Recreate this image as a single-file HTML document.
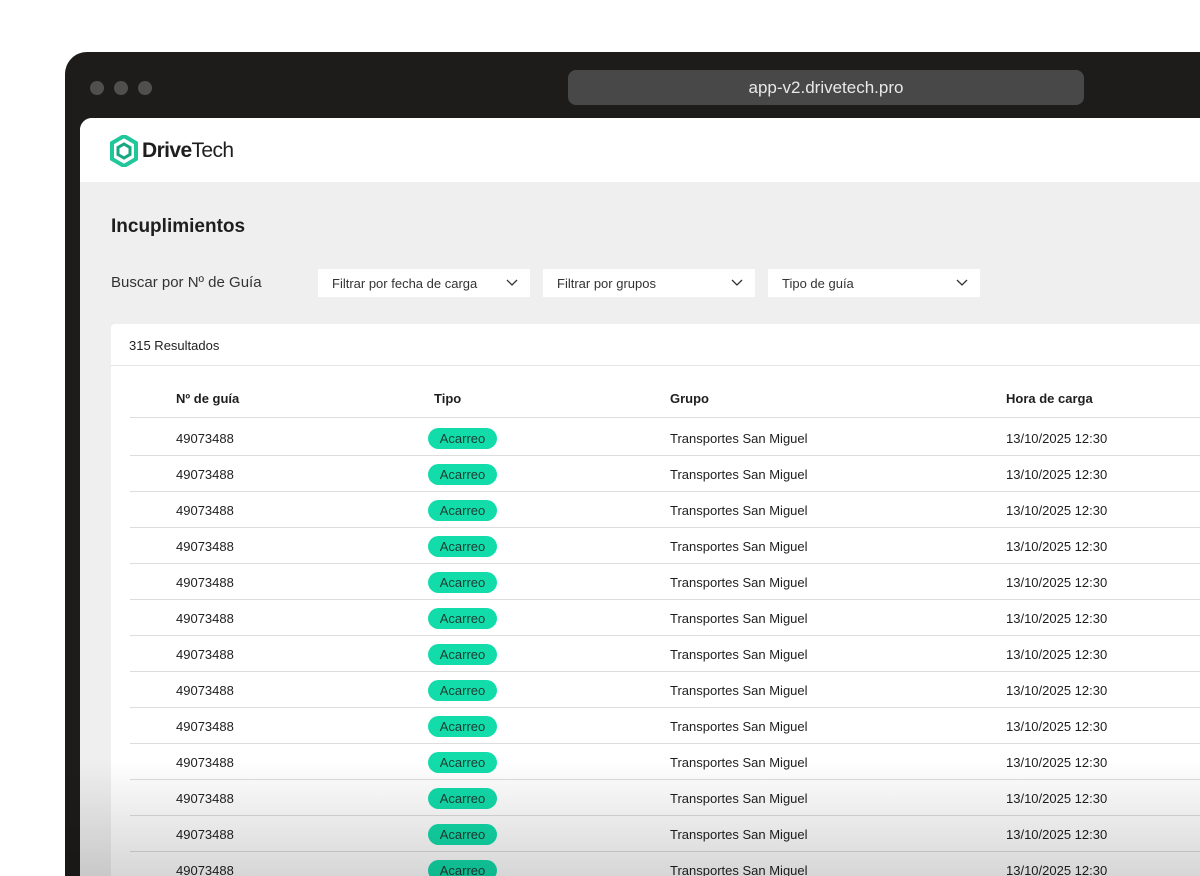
<!DOCTYPE html><html style="width:1200px;height:876px;overflow:hidden"><head><style>
*{margin:0;padding:0;box-sizing:border-box}
body{width:1200px;height:876px;background:#fff;position:relative;overflow:hidden;font-family:"Liberation Sans",sans-serif;color:#1e1e1e}
.frame{position:absolute;left:65px;top:52px;width:1135px;height:824px;background:#1d1c1a;border-radius:22px 0 0 0}
.dot{position:absolute;top:81px;width:14px;height:14px;border-radius:50%;background:#4f4f4f}
.url{position:absolute;left:568px;top:70px;width:516px;height:35px;background:#484848;border-radius:8px;color:#e8e8e8;font-size:17px;text-align:center;line-height:35px}
.screen{position:absolute;left:80px;top:118px;width:1120px;height:758px;background:#efefef;border-radius:12px 0 0 0;overflow:hidden}
.hdr{height:64px;background:#fff}
.logo{position:absolute;left:30px;top:17px;display:flex;align-items:center;gap:4px;font-size:21px;letter-spacing:-0.6px}
h1{position:absolute;left:31px;top:98px;font-size:19px;font-weight:bold}
.srch{position:absolute;left:31px;top:156px;font-size:15px;color:#333}
.sel{position:absolute;top:151px;width:212px;height:28px;background:#fff;font-size:13px;color:#333;line-height:30px;padding-left:14px}
.sel svg{position:absolute;right:12px;top:10px}
.card{position:absolute;left:31px;top:206px;width:1100px;height:700px;background:#fff;border-radius:4px}
.res{height:42px;border-bottom:1px solid #e6e6e6;font-size:13px;line-height:44px;padding-left:18px}
.th,.tr{position:absolute;left:19px;width:1080px;font-size:13px}
.th{top:52px;height:42px;font-weight:bold;border-bottom:1px solid #ddd}
.tr{height:36px;border-bottom:1px solid #ddd}
.c{position:absolute;top:1px}
.pill{position:absolute;left:298px;top:8px;width:69px;height:21px;border-radius:11px;background:#12dcaa;text-align:center;line-height:21px;font-size:13px;color:#1d3b33}
.fade{position:absolute;left:65px;top:760px;width:1135px;height:116px;background:linear-gradient(rgba(0,0,0,0),rgba(0,0,0,0.16));pointer-events:none}
</style></head><body>
<div class="frame"></div>
<div class="dot" style="left:90px"></div><div class="dot" style="left:114px"></div><div class="dot" style="left:138px"></div>
<div class="url">app-v2.drivetech.pro</div>
<div class="screen">
<div class="hdr"></div>
<div class="logo"><svg width="28" height="32" viewBox="0 0 28 32"><polygon points="14,1 26,8 26,24 14,31 2,24 2,8" fill="none" stroke="#1fc79a" stroke-width="4"/><polygon points="14,9 20,12.5 20,19.5 14,23 8,19.5 8,12.5" fill="none" stroke="#17a883" stroke-width="3"/></svg><span><b>Drive</b>Tech</span></div>
<h1>Incuplimientos</h1>
<div class="srch">Buscar por Nº de Guía</div>
<div class="sel" style="left:238px">Filtrar por fecha de carga<svg width="12" height="8"><path d="M1 1l5 5 5-5" fill="none" stroke="#333" stroke-width="1.3"/></svg></div>
<div class="sel" style="left:463px">Filtrar por grupos<svg width="12" height="8"><path d="M1 1l5 5 5-5" fill="none" stroke="#333" stroke-width="1.3"/></svg></div>
<div class="sel" style="left:688px">Tipo de guía<svg width="12" height="8"><path d="M1 1l5 5 5-5" fill="none" stroke="#333" stroke-width="1.3"/></svg></div>
<div class="card">
<div class="res">315 Resultados</div>
<div class="th" style="line-height:44px"><span class="c" style="left:46px">Nº de guía</span><span class="c" style="left:304px">Tipo</span><span class="c" style="left:540px">Grupo</span><span class="c" style="left:876px">Hora de carga</span></div>
<div id="rows"></div>
</div>
</div>
<div class="fade"></div>
<script>
var h='';for(var i=0;i<13;i++){h+='<div class="tr" style="top:'+(96+i*36)+'px;line-height:36px"><span class="c" style="left:46px">49073488</span><span class="pill">Acarreo</span><span class="c" style="left:540px">Transportes San Miguel</span><span class="c" style="left:876px">13/10/2025 12:30</span></div>'}
document.getElementById('rows').innerHTML=h;
</script>
</body></html>
